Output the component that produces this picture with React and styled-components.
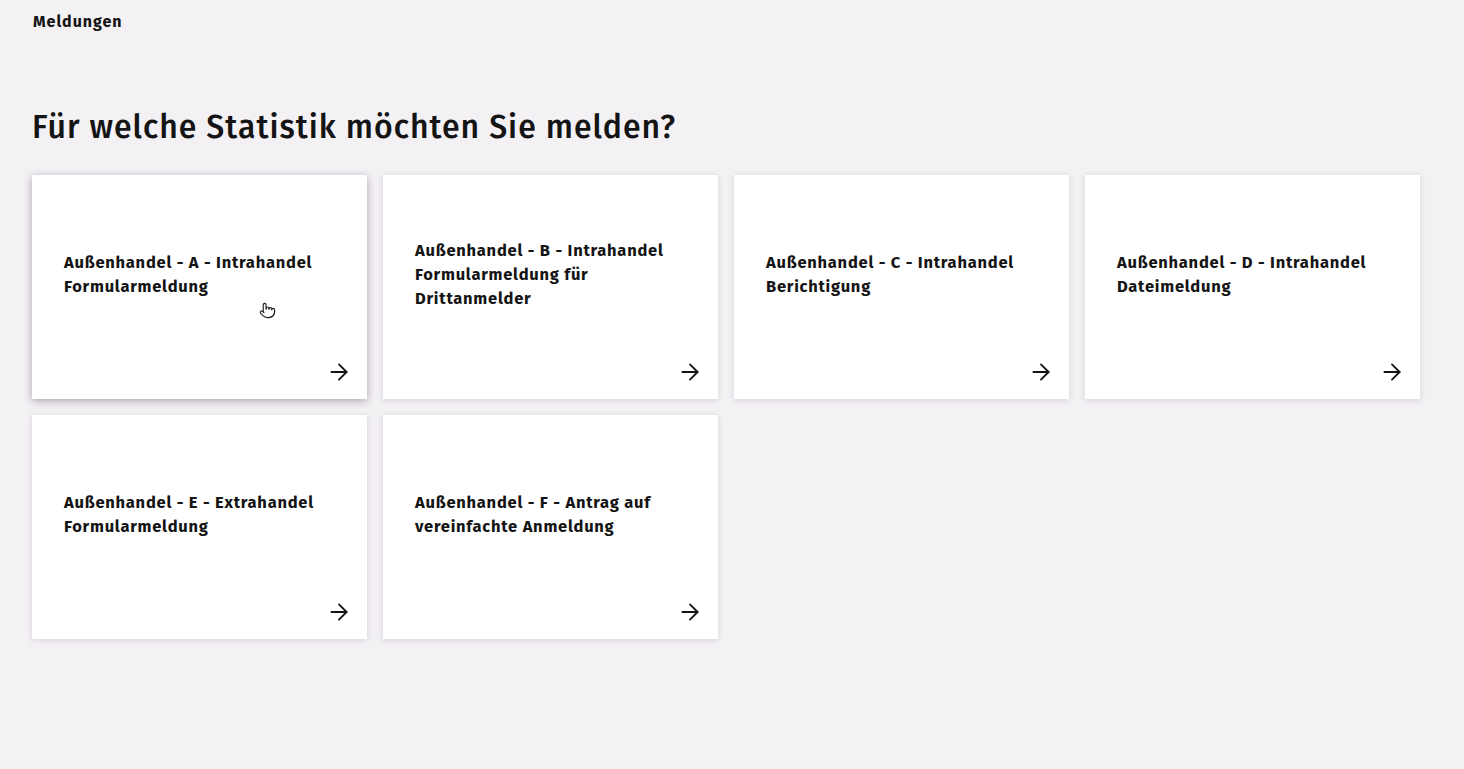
import React from 'react';
import styled, { createGlobalStyle } from 'styled-components';
import { ArrowRight, Pointer } from 'lucide-react';

const GlobalStyle = createGlobalStyle`
  html, body {
    margin: 0;
    padding: 0;
    background: #f3f1f4;
  }
  body {
    font-family: "Fira Sans", "Noto Sans", "Open Sans", sans-serif;
    color: #141414;
  }
`;

const Page = styled.div`
  min-height: 769px;
  padding: 12px 32px 32px 32px;
  box-sizing: border-box;
`;

const Crumb = styled.div`
  font-size: 16px;
  font-weight: 700;
  line-height: 20px;
  letter-spacing: 1px;
  padding-left: 1px;
`;

const Heading = styled.h1`
  margin: 75px 0 0 0;
  font-size: 32px;
  font-weight: 500;
  line-height: 40px;
  letter-spacing: 1px;
`;

const Grid = styled.div`
  display: grid;
  grid-template-columns: repeat(4, 335px);
  grid-auto-rows: 224px;
  gap: 16px;
  margin-top: 28px;
`;

const Card = styled.a`
  position: relative;
  display: flex;
  flex-direction: column;
  background: #fff;
  padding: 16px 15px 14px 32px;
  box-sizing: border-box;
  color: inherit;
  text-decoration: none;
  box-shadow: ${p => p.$hover
    ? '0 2px 8px rgba(40, 20, 50, 0.35)'
    : '0 1px 6px rgba(90, 60, 100, 0.18)'};
`;

const Body = styled.div`
  flex: 1;
  display: flex;
  align-items: center;
  padding-right: 17px;
`;

const Title = styled.div`
  font-size: 16.5px;
  font-weight: 700;
  line-height: 24px;
  letter-spacing: 0.75px;
`;

const Footer = styled.div`
  display: flex;
  justify-content: flex-end;
  height: 26px;
`;

const Cursor = styled.span`
  position: absolute;
  left: 227px;
  top: 127px;
  color: #222;
  display: flex;
`;

const items = [
  'Außenhandel - A - Intrahandel Formularmeldung',
  'Außenhandel - B - Intrahandel Formularmeldung für Drittanmelder',
  'Außenhandel - C - Intrahandel Berichtigung',
  'Außenhandel - D - Intrahandel Dateimeldung',
  'Außenhandel - E - Extrahandel Formularmeldung',
  'Außenhandel - F - Antrag auf vereinfachte Anmeldung',
];

export default function App() {
  return (
    <>
      <GlobalStyle />
      <Page>
        <Crumb>Meldungen</Crumb>
        <Heading>Für welche Statistik möchten Sie melden?</Heading>
        <Grid>
          {items.map((t, i) => (
            <Card key={t} href="#" $hover={i === 0}>
              <Body>
                <Title>{t}</Title>
              </Body>
              <Footer>
                <ArrowRight size={26} strokeWidth={1.7} />
              </Footer>
              {i === 0 && (
                <Cursor>
                  <Pointer size={17} strokeWidth={1.6} />
                </Cursor>
              )}
            </Card>
          ))}
        </Grid>
      </Page>
    </>
  );
}
